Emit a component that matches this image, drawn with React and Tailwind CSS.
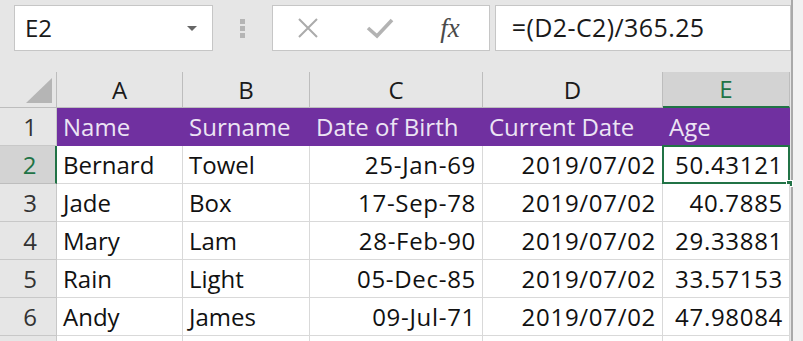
import React from 'react';

const cols = ['A', 'B', 'C', 'D', 'E'];

const rows = [
  ['Bernard', 'Towel', '25-Jan-69', '2019/07/02', '50.43121'],
  ['Jade', 'Box', '17-Sep-78', '2019/07/02', '40.7885'],
  ['Mary', 'Lam', '28-Feb-90', '2019/07/02', '29.33881'],
  ['Rain', 'Light', '05-Dec-85', '2019/07/02', '33.57153'],
  ['Andy', 'James', '09-Jul-71', '2019/07/02', '47.98084'],
];

const font = { fontFamily: '"Open Sans", "Noto Sans", sans-serif' };

const FormulaBar = () => (
  <div className="flex shrink-0 items-start h-[72px] pt-[5px] pl-[14px]">
    {/* name box */}
    <div className="w-[199px] h-[46px] bg-white border border-[#c6c6c6] flex items-center pl-[10px] pr-[15px]">
      <span className="flex-1 text-[24px] text-[#1a1a1a]">E2</span>
      <svg width="10" height="5" viewBox="0 0 10 5">
        <path d="M0 0 L10 0 L5 5 Z" fill="#666" />
      </svg>
    </div>
    {/* grip dots */}
    <div className="w-[60px] h-[46px] flex flex-col items-center justify-center gap-[2px]">
      <div className="w-[5px] h-[5px] bg-[#b5b5b5]" />
      <div className="w-[5px] h-[5px] bg-[#b5b5b5]" />
      <div className="w-[5px] h-[5px] bg-[#b5b5b5]" />
    </div>
    {/* cancel / enter / fx */}
    <div className="w-[218px] h-[46px] bg-white border border-[#c6c6c6] flex items-center">
      <div className="w-[70px] flex justify-center">
        <svg width="24" height="20" viewBox="0 0 24 20">
          <path d="M3 1 L21 19 M21 1 L3 19" stroke="#ababab" strokeWidth="2" />
        </svg>
      </div>
      <div className="w-[74px] flex justify-center">
        <svg width="28" height="22" viewBox="0 0 28 22">
          <path d="M2 11 L11 19 L26 3" stroke="#b3b3b3" strokeWidth="3.6" fill="none" />
        </svg>
      </div>
      <div className="flex-1 flex justify-center pr-[6px]">
        <span className="italic text-[27px] text-[#4a4a4a] leading-none" style={{ fontFamily: '"Liberation Serif", serif' }}>
          fx
        </span>
      </div>
    </div>
    {/* formula */}
    <div className="ml-[5px] w-[297px] h-[46px] bg-white border border-[#c6c6c6] flex items-center pl-[16px]">
      <span className="text-[25px] tracking-[0.4px] text-[#1a1a1a]">=(D2-C2)/365.25</span>
    </div>
  </div>
);

const App = () => {
  return (
    <div className="w-[803px] h-[341px] overflow-hidden bg-[#f2f2f2] flex" style={font}>
      <div className="w-[793px] h-full bg-[#e6e6e6] border-r-2 border-[#a9a9a9] flex flex-col">
        <FormulaBar />

        <div className="grid shrink-0 grid-cols-[57px_126px_127px_173px_180px_127px] grid-rows-[36px_38px_38px_38px_38px_38px_38px_10px] leading-none">
          {/* column headers */}
          <div className="relative border-r border-b border-[#bdbdbd] bg-[#e6e6e6]">
            <svg className="absolute left-[26px] top-[6px]" width="26" height="25" viewBox="0 0 26 25">
              <path d="M26 0 L26 25 L0 25 Z" fill="#b5b5b5" />
            </svg>
          </div>
          {cols.map((c) => (
            <div
              key={c}
              className={
                c === 'E'
                  ? 'flex items-center justify-center text-[24px] text-[#217346] bg-[#d3d3d3] border-r border-[#bdbdbd] border-b-2 border-b-[#217346]'
                  : 'flex items-center justify-center text-[24px] text-[#1a1a1a] border-r border-b border-[#bdbdbd]'
              }
            >
              {c}
            </div>
          ))}

          {/* row 1 */}
          <div className="flex items-center justify-center text-[24px] text-[#333] border-r border-b border-[#c8c8c8] pl-[4px]">1</div>
          {['Name', 'Surname', 'Date of Birth', 'Current Date', 'Age'].map((h) => (
            <div key={h} className="flex items-center pl-[6px] text-[24px] text-[#ece4f4] bg-[#7030a0] whitespace-nowrap">
              {h}
            </div>
          ))}

          {rows.map((r, i) => {
            const n = i + 2;
            const sel = n === 2;
            return (
              <React.Fragment key={n}>
                <div
                  className={
                    sel
                      ? 'flex items-center justify-center text-[24px] text-[#217346] bg-[#d3d3d3] border-r-2 border-r-[#217346] border-b border-[#bdbdbd] pl-[4px]'
                      : 'flex items-center justify-center text-[24px] text-[#333] border-r border-b border-[#c8c8c8] pl-[4px]'
                  }
                >
                  {n}
                </div>
                {r.map((v, j) => (
                  <div
                    key={j}
                    className={
                      (j < 2 ? 'justify-start pl-[6px] ' : 'justify-end pr-[6px] tracking-[0.7px] ') +
                      'relative flex items-center bg-white text-[24px] text-[#111] border-r border-b border-[#d9d9d9] whitespace-nowrap'
                    }
                  >
                    {v}
                    {sel && j === 4 && (
                      <>
                        <div className="absolute -left-px -top-px -right-px -bottom-px border-2 border-[#217346]" />
                        <div className="absolute -right-[4px] -bottom-[4px] w-[7px] h-[7px] bg-[#217346] border border-white" />
                      </>
                    )}
                  </div>
                ))}
              </React.Fragment>
            );
          })}

          {/* partial row 7 */}
          <div className="border-r border-[#c8c8c8]" />
          {cols.map((c) => (
            <div key={'r7' + c} className="bg-white border-r border-[#d9d9d9]" />
          ))}
        </div>
      </div>
    </div>
  );
};

export default App;
